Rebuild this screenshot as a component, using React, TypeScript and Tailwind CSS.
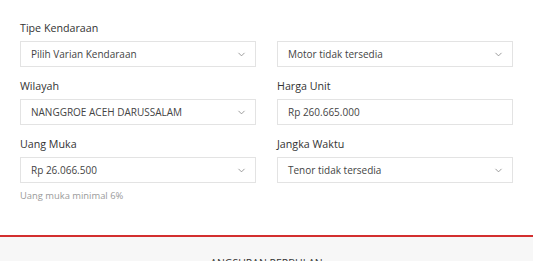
import { ChevronDown } from 'lucide-react'

interface Field {
  label?: string
  value: string
  select?: boolean
  hint?: string
}

const rows: [Field, Field][] = [
  [
    { label: 'Tipe Kendaraan', value: 'Pilih Varian Kendaraan', select: true },
    { label: '', value: 'Motor tidak tersedia', select: true },
  ],
  [
    { label: 'Wilayah', value: 'NANGGROE ACEH DARUSSALAM', select: true },
    { label: 'Harga Unit', value: 'Rp 260.665.000' },
  ],
  [
    { label: 'Uang Muka', value: 'Rp 26.066.500', select: true, hint: 'Uang muka minimal 6%' },
    { label: 'Jangka Waktu', value: 'Tenor tidak tersedia', select: true },
  ],
]

function FormField({ field }: { field: Field }) {
  return (
    <div>
      <div className="h-4 text-[10.7px] leading-4 text-[#333]">{field.label}</div>
      <div className="mt-[5px] flex h-[26px] items-center justify-between border border-[#e3e3e3] bg-white pl-[10px] pr-[8px] text-[10px] text-[#444]">
        <span>{field.value}</span>
        {field.select && <ChevronDown size={11} strokeWidth={1.8} className="text-[#888]" />}
      </div>
      {field.hint && <p className="mt-[5px] text-[9.4px] leading-4 text-[#9a9a9a]">{field.hint}</p>}
    </div>
  )
}

export default function App() {
  return (
    <div className="h-[261px] overflow-hidden bg-white" style={{ fontFamily: '"Open Sans", sans-serif' }}>
      <div className="px-5 pt-5">
        <div className="flex flex-col gap-[11px]">
          {rows.map((row, i) => (
            <div key={i} className="grid grid-cols-2 gap-x-[21px] items-start">
              <FormField field={row[0]} />
              <FormField field={row[1]} />
            </div>
          ))}
        </div>
      </div>
      <div className="mt-[31px] border-t-2 border-[#d32f2f] bg-[#f7f7f7] pt-[18px] pb-10 text-center">
        <h3 className="text-[10.5px] leading-4 text-[#333] uppercase">Angsuran Perbulan</h3>
      </div>
    </div>
  )
}
